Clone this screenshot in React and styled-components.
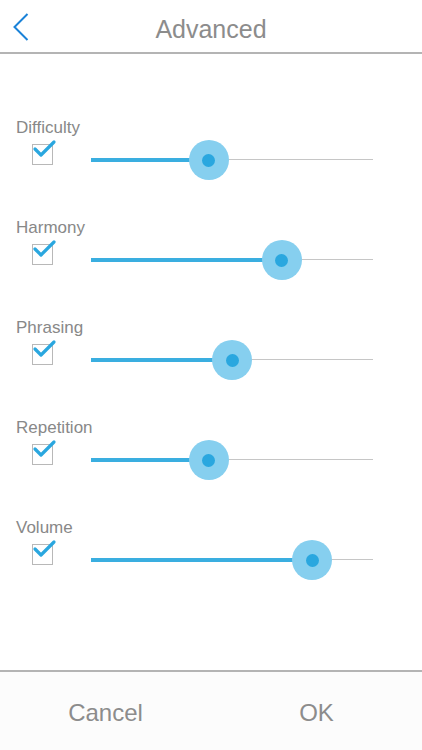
import React from 'react';
import styled, { createGlobalStyle } from 'styled-components';

const GlobalStyle = createGlobalStyle`
  html, body {
    margin: 0;
    padding: 0;
    background: #ffffff;
  }
  body {
    font-family: "Liberation Sans", Arial, sans-serif;
  }
`;

const settings = [
  { name: 'Difficulty', value: 0.418, checked: true },
  { name: 'Harmony', value: 0.677, checked: true },
  { name: 'Phrasing', value: 0.5, checked: true },
  { name: 'Repetition', value: 0.418, checked: true },
  { name: 'Volume', value: 0.784, checked: true },
];

const App = () => {
  const [items, setItems] = React.useState(settings)

  const toggle = (i) => {
    setItems(items.map((it, idx) => idx === i ? { ...it, checked: !it.checked } : it))
  }

  return <Screen>
    <GlobalStyle />
    <Header>
      <BackButton aria-label='back'>
        <svg width='16' height='30' viewBox='0 0 16 30'>
          <polyline points='14.5,1 1.5,14 14.5,27' fill='none' stroke='#1a82d8' strokeWidth='2' />
        </svg>
      </BackButton>
      <Title>Advanced</Title>
    </Header>
    <Content>
      {items.map((item, i) => (
        <Setting key={item.name}>
          <Label>{item.name}</Label>
          <Controls>
            <CheckBox onClick={() => toggle(i)}>
              {item.checked && (
                <svg width='26' height='22' viewBox='0 0 26 22'>
                  <polyline points='4,10 10,16 23,3' fill='none' stroke='#2aa7df' strokeWidth='3.2' strokeLinecap='round' strokeLinejoin='round' />
                </svg>
              )}
            </CheckBox>
            <Slider>
              <Track />
              <Fill style={{ width: `${item.value * 100}%` }} />
              <Thumb style={{ left: `${item.value * 100}%` }}>
                <Dot />
              </Thumb>
            </Slider>
          </Controls>
        </Setting>
      ))}
    </Content>
    <Footer>
      <FooterButton>Cancel</FooterButton>
      <FooterButton>OK</FooterButton>
    </Footer>
  </Screen>
};

const Screen = styled.div`
  width: 422px;
  height: 750px;
  display: flex;
  flex-direction: column;
  overflow: hidden;
  background: #ffffff;
`;

const Header = styled.header`
  position: relative;
  height: 52px;
  display: flex;
  align-items: center;
  justify-content: center;
  border-bottom: 2px solid #b4b4b4;
  flex-shrink: 0;
`;

const BackButton = styled.button`
  position: absolute;
  left: 13px;
  top: 13px;
  padding: 0;
  border: none;
  background: none;
  display: flex;
  cursor: pointer;
`;

const Title = styled.h1`
  margin: 0;
  font-size: 25px;
  font-weight: 400;
  color: #8c8c8c;
  padding-top: 6px;
`;

const Content = styled.main`
  flex: 1;
  display: flex;
  flex-direction: column;
  gap: 38px;
  padding: 64px 0 0 16px;
`;

const Setting = styled.section`
  display: flex;
  flex-direction: column;
  gap: 2px;
`;

const Label = styled.div`
  height: 20px;
  line-height: 20px;
  font-size: 17px;
  color: #888888;
`;

const Controls = styled.div`
  display: flex;
  align-items: flex-start;
  height: 40px;
`;

const CheckBox = styled.div`
  position: relative;
  box-sizing: border-box;
  width: 21px;
  height: 21px;
  margin: 4px 0 0 16px;
  border: 1px solid #b8b8b8;
  cursor: pointer;

  svg {
    position: absolute;
    left: -2px;
    top: -6px;
  }
`;

const Slider = styled.div`
  position: relative;
  width: 282px;
  height: 40px;
  margin-left: 38px;
`;

const Track = styled.div`
  position: absolute;
  left: 0;
  right: 0;
  top: 19px;
  height: 1px;
  background: #c6c6c6;
`;

const Fill = styled.div`
  position: absolute;
  left: 0;
  top: 18px;
  height: 4px;
  background: #3aaee0;
`;

const Thumb = styled.div`
  position: absolute;
  top: 0;
  width: 40px;
  height: 40px;
  margin-left: -20px;
  border-radius: 50%;
  background: #86cfef;
  display: flex;
  align-items: center;
  justify-content: center;
`;

const Dot = styled.div`
  width: 13px;
  height: 13px;
  border-radius: 50%;
  background: #2aa7df;
`;

const Footer = styled.footer`
  height: 78px;
  flex-shrink: 0;
  display: grid;
  grid-template-columns: 1fr 1fr;
  border-top: 2px solid #b4b4b4;
  background: #fcfcfc;
`;

const FooterButton = styled.button`
  border: none;
  background: none;
  font-family: "Liberation Sans", Arial, sans-serif;
  font-size: 24px;
  color: #8c8c8c;
  padding: 4px 0 0 0;
  cursor: pointer;
`;

export default App;
